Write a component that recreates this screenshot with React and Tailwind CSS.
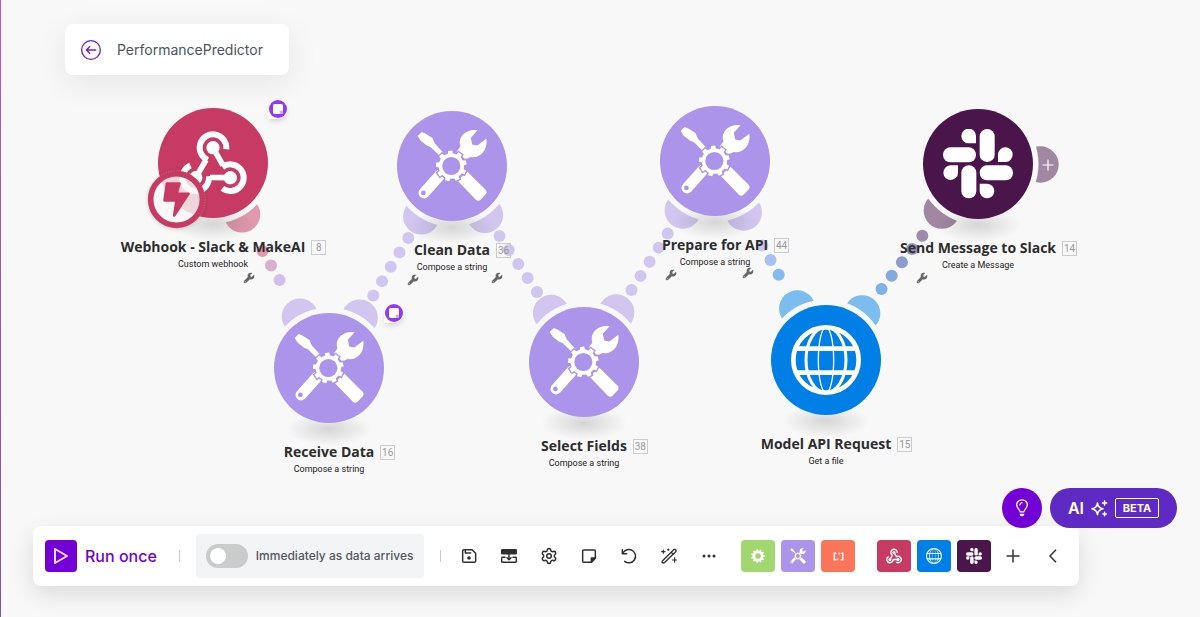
import React from "react";
import { Settings } from "lucide-react";
import { FaWrench } from "react-icons/fa6";

const NODE_RADIUS = 55;
const PURPLE = "#ab94e9";
const CRIMSON = "#c73a63";
const BLUE = "#0080e6";
const PLUM = "#4a154b";

/* ---------- module icons ---------- */

function cogPath(cx, cy, inner, outer, teeth, offset) {
  const step = (Math.PI * 2) / teeth;
  const points = [];
  for (let i = 0; i < teeth; i++) {
    const a = offset + i * step;
    [
      [-0.27, inner],
      [-0.2, outer],
      [0.2, outer],
      [0.27, inner],
    ].forEach(([t, r]) => {
      points.push(`${(cx + r * Math.cos(a + t * step)).toFixed(2)} ${(cy + r * Math.sin(a + t * step)).toFixed(2)}`);
    });
  }
  return `M${points.join("L")}Z`;
}

function ToolsIcon({ className }) {
  return (
    <svg viewBox="52 62 208 212" className={className} aria-hidden="true">
      <g fill="#fff">
        <path d="M66 68L54 80L63 94L81 108L93 113L121 140L131 130L105 102L98 86L78 73Z" />
        <path d="M232 63L212 85L216 105L231 108L258 88C263 120 240 148 211 142L196 150L170 126L181 111C171 84 198 57 232 63Z" />
        <path d="M120 196L73 249" stroke="#fff" strokeWidth="33" strokeLinecap="round" />
        <path d="M172 212L202 186L255 239Q262 246 256 253L241 269Q234 275 227 269Z" />
      </g>
      <circle cx="71" cy="249" r="7" fill="currentColor" />
      <path d={cogPath(154, 169, 38, 46, 9, -0.25)} fill="#fff" stroke="currentColor" strokeWidth="8" />
      <path d={cogPath(154, 169, 38, 46, 9, -0.25)} fill="#fff" />
      <circle cx="154" cy="169" r="27" fill="currentColor" />
    </svg>
  );
}

function WebhookIcon({ className }) {
  return (
    <svg viewBox="117 95 204 190" className={className} aria-hidden="true">
      {[0, 120, 240].map((angle) => (
        <g key={angle} transform={`rotate(${angle} 219 205)`}>
          <circle cx="219" cy="145" r="20" fill="#fff" />
          <path d="M219 145L249 198" stroke="#fff" strokeWidth="17" />
          <path d="M247 203A40 40 0 1 1 247 267" fill="none" stroke="#fff" strokeWidth="18" />
        </g>
      ))}
    </svg>
  );
}

function GlobeIcon({ className }) {
  return (
    <svg viewBox="123 705 210 210" className={className} aria-hidden="true">
      <g fill="none" stroke="#fff">
        <circle cx="228" cy="810" r="98" strokeWidth="14" />
        <ellipse cx="228" cy="810" rx="60" ry="98" strokeWidth="9" />
        <ellipse cx="228" cy="810" rx="23" ry="98" strokeWidth="4" />
        <path d="M136 776H320M136 848H320" strokeWidth="14" />
      </g>
    </svg>
  );
}

function SlackIcon({ className }) {
  return (
    <svg viewBox="579 119 210 209" className={className} fill="#fff" aria-hidden="true">
      <rect x="579" y="174" width="99" height="45" rx="22" />
      <rect x="689" y="119" width="45" height="99" rx="22" />
      <rect x="689" y="228" width="100" height="45" rx="22" />
      <rect x="634" y="228" width="45" height="99" rx="22" />
      <path d="M678 162H656A22 22 0 1 1 678 141Z" />
      <path d="M744 218V196A22 22 0 1 1 767 218Z" />
      <path d="M624 228V250A22 22 0 1 1 601 228Z" />
      <path d="M689 283H712A22 22 0 1 1 689 306Z" />
    </svg>
  );
}

/* ---------- scenario data ---------- */

const nodes = {
  webhook: { x: 213, y: 163, color: CRIMSON, paint: "bg-[#c73a63] text-[#c73a63]", Icon: WebhookIcon, size: "w-[68px]", title: "Webhook - Slack & MakeAI", sub: "Custom webhook", id: 8 },
  clean: { x: 452, y: 166, color: PURPLE, paint: "bg-[#ab94e9] text-[#ab94e9]", Icon: ToolsIcon, size: "w-[70px]", title: "Clean Data", sub: "Compose a string", id: 36 },
  prepare: { x: 715, y: 161, color: PURPLE, paint: "bg-[#ab94e9] text-[#ab94e9]", Icon: ToolsIcon, size: "w-[70px]", title: "Prepare for API", sub: "Compose a string", id: 44 },
  slack: { x: 978, y: 164, color: PLUM, paint: "bg-[#4a154b] text-[#4a154b]", Icon: SlackIcon, size: "w-[70px]", title: "Send Message to Slack", sub: "Create a Message", id: 14 },
  receive: { x: 329, y: 368, color: PURPLE, paint: "bg-[#ab94e9] text-[#ab94e9]", Icon: ToolsIcon, size: "w-[70px]", title: "Receive Data", sub: "Compose a string", id: 16 },
  select: { x: 584, y: 362, color: PURPLE, paint: "bg-[#ab94e9] text-[#ab94e9]", Icon: ToolsIcon, size: "w-[70px]", title: "Select Fields", sub: "Compose a string", id: 38 },
  model: { x: 826, y: 360, color: BLUE, paint: "bg-[#0080e6] text-[#0080e6]", Icon: GlobeIcon, size: "w-[70px]", title: "Model API Request", sub: "Get a file", id: 15 },
};

const links = [
  { a: "webhook", b: "receive", from: [262.5, 251], to: [279.5, 280], colors: ["#e09ab0", "#dab0d0", "#d3bfea"] },
  { a: "clean", b: "receive", from: [408.3, 238], to: [373.3, 295.5], colors: Array(5).fill("#d1c6f0") },
  { a: "clean", b: "select", from: [499.5, 236], to: [537, 292], colors: Array(5).fill("#d1c6f0") },
  { a: "prepare", b: "select", from: [667.7, 233.5], to: [631.5, 290], colors: Array(5).fill("#d1c6f0") },
  { a: "prepare", b: "model", from: [762.3, 245.5], to: [778.7, 274.7], colors: ["#ccc5f1", "#a6c0f2", "#84baf0"] },
  { a: "slack", b: "model", from: [922.3, 235.7], to: [881.5, 289], colors: ["#a08aa9", "#9690b8", "#8e9cca", "#85a9db", "#7fb3e8"] },
];

const wrenches = [
  [249, 278],
  [413, 280],
  [497, 278],
  [671, 275],
  [748, 273],
  [922, 278],
];

const notes = [
  [278, 109],
  [394, 313],
];

function Ear({ from, to }) {
  const d = Math.hypot(to.x - from.x, to.y - from.y);
  return (
    <circle
      cx={from.x + ((to.x - from.x) / d) * 59}
      cy={from.y + ((to.y - from.y) / d) * 59}
      r="18.2"
      fill={from.color}
      fillOpacity="0.5"
    />
  );
}

function Connections() {
  return (
    <svg className="absolute inset-0 h-full w-full" aria-hidden="true">
      <defs>
        <radialGradient id="ground">
          <stop offset="0" stopColor="#000" stopOpacity="0.14" />
          <stop offset="0.5" stopColor="#000" stopOpacity="0.07" />
          <stop offset="1" stopColor="#000" stopOpacity="0" />
        </radialGradient>
      </defs>
      {links.map((l) => (
        <g key={l.a + l.b}>
          <Ear from={nodes[l.a]} to={nodes[l.b]} />
          <Ear from={nodes[l.b]} to={nodes[l.a]} />
        </g>
      ))}
      <circle cx="1040.5" cy="164.5" r="18.2" fill={PLUM} fillOpacity="0.5" />
      {Object.entries(nodes).map(([key, n]) => (
        <g key={key}>
          <circle cx={n.x} cy={n.y} r="60.5" fill="#f8f8f8" />
          <ellipse cx={n.x} cy={n.y + 61} rx="43" ry="17" fill="url(#ground)" />
        </g>
      ))}
      {links.map((l) =>
        l.colors.map((c, i) => {
          const t = i / (l.colors.length - 1);
          return (
            <circle
              key={l.a + l.b + i}
              cx={l.from[0] + (l.to[0] - l.from[0]) * t}
              cy={l.from[1] + (l.to[1] - l.from[1]) * t}
              r="6"
              fill={c}
            />
          );
        })
      )}
    </svg>
  );
}

function Module({ node }) {
  const { Icon } = node;
  return (
    <div
      className="absolute flex w-[260px] -translate-x-1/2 flex-col items-center"
      style={{ left: node.x, top: node.y - NODE_RADIUS }}
    >
      <button
        type="button"
        aria-label={node.title}
        className={`flex size-[110px] items-center justify-center rounded-full ${node.paint}`}
      >
        <Icon className={node.size} />
      </button>
      <div className="mt-[19px] grid grid-cols-[1fr_auto_1fr] items-center gap-1.5 font-['Open_Sans',sans-serif]">
        <span />
        <h2 className="text-[14px] leading-5 font-bold whitespace-nowrap text-[#2d2d2d]">{node.title}</h2>
        <span className="w-[15px] border border-[#ccc] text-center font-['Roboto',sans-serif] text-[10px] leading-[13px] text-[#999]">
          {node.id}
        </span>
      </div>
      <p className="text-center font-['Roboto',sans-serif] text-[9px] leading-[14px] text-[#222]">{node.sub}</p>
    </div>
  );
}

function TriggerBadge() {
  return (
    <svg
      viewBox="20 209 178 178"
      className="absolute top-[170px] left-[147px] size-[59px] drop-shadow-sm"
      aria-hidden="true"
    >
      <circle cx="109" cy="298" r="78" fill="#fff" fillOpacity="0.8" stroke={CRIMSON} strokeWidth="17" />
      <circle cx="109" cy="298" r="87" fill="none" stroke="#fff" strokeOpacity="0.35" strokeDasharray="4 4" strokeWidth="2" />
      <path
        d="M80 250H118L109 281H145L102 346L109 301H73Z"
        fill={CRIMSON}
        stroke={CRIMSON}
        strokeWidth="8"
        strokeLinejoin="round"
      />
    </svg>
  );
}

function NoteBadge({ x, y }) {
  return (
    <button
      type="button"
      aria-label="Open note"
      className="absolute flex size-5 -translate-x-1/2 -translate-y-1/2 items-center justify-center rounded-full rounded-bl-none bg-white shadow-md"
      style={{ left: x, top: y }}
    >
      <span className="flex size-[18px] items-center justify-center rounded-full bg-[#9138fb]">
        <svg viewBox="0 0 9 9" className="size-2.5" aria-hidden="true">
          <path d="M1.5 0H7.5Q9 0 9 1.5V9H1.5Q0 9 0 7.5V1.5Q0 0 1.5 0Z" fill="#fff" />
          <path d="M6 9V6H9V9Z" fill="#d3b2fd" />
        </svg>
      </span>
    </button>
  );
}

function Canvas() {
  return (
    <section className="absolute inset-0" aria-label="Scenario">
      <Connections />
      {Object.entries(nodes).map(([key, n]) => (
        <Module key={key} node={n} />
      ))}
      <TriggerBadge />
      <button
        type="button"
        aria-label="Add another module"
        className="absolute top-[156px] left-[1039px] flex size-[17px] items-center justify-center"
      >
        <svg viewBox="0 0 12 12" className="size-3" stroke="#fff" strokeWidth="1.2" aria-hidden="true">
          <path d="M6 0.5V11.5M0.5 6H11.5" />
        </svg>
      </button>
      {wrenches.map(([x, y]) => (
        <FaWrench
          key={x}
          className="absolute size-[11px] -translate-x-1/2 -translate-y-1/2 text-[#666]"
          style={{ left: x, top: y }}
          aria-hidden="true"
        />
      ))}
      {notes.map(([x, y]) => (
        <NoteBadge key={x} x={x} y={y} />
      ))}
    </section>
  );
}

/* ---------- toolbar ---------- */

function Glyph({ box, children }) {
  return (
    <svg
      viewBox={box}
      className="size-4"
      fill="none"
      stroke="currentColor"
      strokeWidth="4.4"
      strokeLinejoin="round"
      strokeLinecap="round"
      aria-hidden="true"
    >
      {children}
    </svg>
  );
}

const tools = [
  {
    label: "Save",
    icon: (
      <Glyph box="91 69 48 48">
        <path d="M96 78Q96 74 100 74H124L135 85V108Q135 112 131 112H100Q96 112 96 108ZM104 75V84H120" />
        <circle cx="115" cy="99" r="5.5" fill="currentColor" stroke="none" />
      </Glyph>
    ),
  },
  {
    label: "Auto-align",
    icon: (
      <Glyph box="211 69 48 48">
        <rect x="213" y="74" width="44" height="12" rx="2" fill="currentColor" />
        <path d="M223 97H216Q213 97 213 100V109Q213 112 216 112H254Q257 112 257 109V100Q257 97 254 97H247M235 88V103M229 98L235 104L241 98" />
      </Glyph>
    ),
  },
  { label: "Scenario settings", icon: <Settings className="size-[18px]" strokeWidth={2} aria-hidden="true" /> },
  {
    label: "Notes",
    icon: (
      <Glyph box="452 69 48 48">
        <path d="M460 75H492Q495 75 495 78V100L483 112H460Q457 112 457 109V78Q457 75 460 75Z" />
        <path d="M495 99H483V112Z" fill="currentColor" />
      </Glyph>
    ),
  },
  {
    label: "Undo",
    icon: (
      <Glyph box="571 69 48 48">
        <path d="M575 74V86H588M577 84A20 20 0 1 1 582 109" />
      </Glyph>
    ),
  },
  {
    label: "Explain flow",
    icon: (
      <Glyph box="690 69 48 48">
        <path strokeWidth="4" d="M694 108L728 74Q731 72 734 74Q737 77 734 80L700 113Q697 115 694 113Q692 111 694 108ZM720 82L727 88" />
        <path strokeWidth="3.4" d="M697 75V85M692 80H702M731 98V112M724 105H738M712 72V76M710 74H714" />
      </Glyph>
    ),
  },
  {
    label: "More",
    icon: (
      <Glyph box="811 69 48 48">
        <g fill="currentColor" stroke="none">
          <circle cx="820" cy="93" r="4.5" />
          <circle cx="835" cy="93" r="4.5" />
          <circle cx="850" cy="93" r="4.5" />
        </g>
      </Glyph>
    ),
  },
];

function FlowControlIcon() {
  return (
    <svg viewBox="0 0 42 42" className="size-3.5" aria-hidden="true">
      <path d={cogPath(21, 21, 16.5, 20.5, 11, 0)} fill="#fff" />
      <circle cx="21" cy="21" r="8.5" fill="currentColor" />
    </svg>
  );
}

function TextParserIcon() {
  return (
    <svg viewBox="334 213 34 28" className="h-[9px] w-[11px]" fill="none" stroke="#fff" strokeWidth="4.5" aria-hidden="true">
      <path d="M344 217H338V237H344M358 217H364V237H358M348 233V239M353 215V221" />
    </svg>
  );
}

const builtIn = [
  { label: "Flow control", paint: "bg-[#a2d66f] text-[#a2d66f]", icon: <FlowControlIcon /> },
  { label: "Tools", paint: "bg-[#ab94e9] text-[#ab94e9]", icon: <ToolsIcon className="size-4" /> },
  { label: "Text parser", paint: "bg-[#fc7459] text-[#fc7459]", icon: <TextParserIcon /> },
];

const favorites = [
  { label: "Webhooks", paint: "bg-[#c73a63] text-[#c73a63]", icon: <WebhookIcon className="size-4" /> },
  { label: "HTTP", paint: "bg-[#0080e6] text-[#0080e6]", icon: <GlobeIcon className="size-4" /> },
  { label: "Slack", paint: "bg-[#4a154b] text-[#4a154b]", icon: <SlackIcon className="size-4" /> },
];

function Swatches({ items }) {
  return (
    <div className="flex gap-1.5">
      {items.map((s) => (
        <button
          key={s.label}
          type="button"
          aria-label={s.label}
          className={`flex h-8 w-[34px] items-center justify-center rounded-sm ${s.paint}`}
        >
          {s.icon}
        </button>
      ))}
    </div>
  );
}

function Toolbar() {
  return (
    <div className="flex h-[60px] w-fit items-center rounded-lg bg-white pr-1.5 pl-3 shadow-[0_8px_24px_rgba(0,0,0,0.12)]">
      <button type="button" className="flex items-center gap-2 text-base font-medium text-[#7300d6]">
        <span className="flex size-8 items-center justify-center rounded-sm bg-[#7300d6]">
          <svg viewBox="0 0 16 18" className="h-[18px] w-4" fill="none" stroke="#f0dcff" strokeWidth="2" strokeLinejoin="round" aria-hidden="true">
            <path d="M2 2L14 9L2 16Z" />
          </svg>
        </span>
        Run once
      </button>
      <span className="ml-[22px] h-3 w-px bg-[#c3c7ce]" />
      <label className="ml-4 flex h-11 items-center gap-2 rounded-sm bg-[#f3f4f6] pr-[11px] pl-2.5 text-xs font-medium text-[#54575b]">
        <input
          type="checkbox"
          role="switch"
          className="h-6 w-[42px] appearance-none rounded-full bg-[#cacbcb] p-1 before:block before:size-4 before:rounded-full before:bg-white checked:bg-[#7300d6]"
        />
        Immediately as data arrives
      </label>
      <span className="ml-4 h-3 w-px bg-[#c3c7ce]" />
      <div className="ml-2 flex text-[#2f2f2f]">
        {tools.map((t) => (
          <button key={t.label} type="button" aria-label={t.label} className="flex h-10 w-10 items-center justify-center">
            {t.icon}
          </button>
        ))}
      </div>
      <div className="ml-3 flex gap-[22px]">
        <Swatches items={builtIn} />
        <Swatches items={favorites} />
      </div>
      <div className="ml-0.5 flex text-[#333]">
        <button type="button" aria-label="Add favorite" className="flex size-10 items-center justify-center">
          <svg viewBox="0 0 14 14" className="size-3.5" stroke="currentColor" strokeWidth="1.5" aria-hidden="true">
            <path d="M7 0.5V13.5M0.5 7H13.5" />
          </svg>
        </button>
        <button type="button" aria-label="Collapse" className="flex size-10 items-center justify-center">
          <svg viewBox="0 0 8 14" className="h-3.5 w-2" fill="none" stroke="currentColor" strokeWidth="1.5" aria-hidden="true">
            <path d="M7 0.7L1 7L7 13.3" />
          </svg>
        </button>
      </div>
    </div>
  );
}

function Assistant() {
  return (
    <div className="z-10 flex justify-end gap-2 pr-[23px]">
      <button type="button" aria-label="Tips" className="flex size-10 items-center justify-center rounded-full bg-[#7300d6]">
        <svg viewBox="0 0 38 56" className="h-[18px] w-3" fill="none" stroke="#fff" strokeWidth="4" strokeLinecap="round" strokeLinejoin="round" aria-hidden="true">
          <path d="M13 40C13 32 2 30 2 18A17 16 0 0 1 36 18C36 30 25 32 25 40ZM12 18Q13 12 19 11" />
          <path d="M12 46H26V49Q24 54 19 54Q14 54 12 49Z" fill="#fff" stroke="none" />
        </svg>
      </button>
      <button type="button" className="flex h-10 items-center gap-[7px] rounded-full bg-[#5f2ac4] px-[18px] text-base font-semibold text-white">
        AI
        <svg viewBox="0 0 50 50" className="size-[17px]" fill="none" stroke="#fff" strokeWidth="4.6" strokeLinejoin="round" strokeLinecap="round" aria-hidden="true">
          <path d="M19 9Q21 23 35 26Q21 29 19 43Q17 29 3 26Q17 23 19 9Z" />
          <path d="M40 3V15M34 9H46M40 36V46M35 41H45" />
        </svg>
        <span className="flex h-5 w-11 items-center justify-center rounded-xs border border-white text-[11px] font-bold">BETA</span>
      </button>
    </div>
  );
}

export default function App() {
  return (
    <main className="relative flex min-h-screen flex-col justify-between overflow-hidden bg-[#f8f8f8] pb-[31px] pl-px font-['Inter',sans-serif]">
      <div className="absolute inset-y-0 left-0 w-px bg-gradient-to-b from-[#b856cc] to-[#7d4fc9]" />
      <Canvas />
      <header className="relative mt-6 ml-16 flex h-[51px] w-fit items-center gap-4 rounded-lg bg-white pr-[26px] pl-4 shadow-[0_8px_32px_rgba(0,0,0,0.08)]">
        <a href="#scenarios" aria-label="Back" className="block text-[#6d1fc4]">
          <svg viewBox="0 0 60 60" className="size-5" fill="none" stroke="currentColor" strokeWidth="4" strokeLinecap="round" strokeLinejoin="round" aria-hidden="true">
            <circle cx="30" cy="30" r="28" />
            <path d="M44 30H17M26 20L16 30L26 40" />
          </svg>
        </a>
        <h1 className="text-sm leading-6 text-[#4b5560]">PerformancePredictor</h1>
      </header>
      <footer className="relative ml-8 flex flex-col">
        <Assistant />
        <div className="-mt-0.5">
          <Toolbar />
        </div>
      </footer>
    </main>
  );
}
